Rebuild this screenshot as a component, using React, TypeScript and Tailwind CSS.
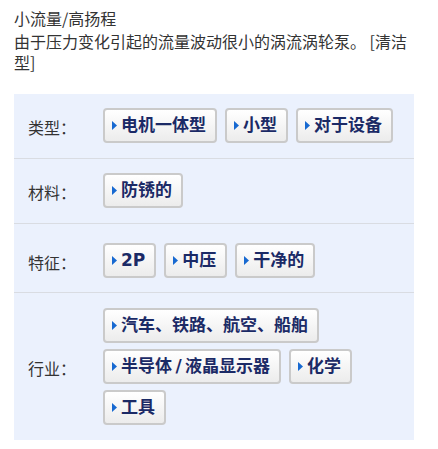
import React from "react";

const rows: { label: string; tags: string[]; pad: string }[] = [
  { label: "类型：", tags: ["电机一体型", "小型", "对于设备"], pad: "pt-[14px] pb-[15px]" },
  { label: "材料：", tags: ["防锈的"], pad: "pt-[14px] pb-[15px]" },
  { label: "特征：", tags: ["2P", "中压", "干净的"], pad: "pt-[19px] pb-[14px]" },
  { label: "行业：", tags: ["汽车、铁路、航空、船舶", "半导体\u2009/\u2009液晶显示器", "化学", "工具"], pad: "pt-[15px] pb-[15px]" },
];

function Tag({ text }: { text: string }) {
  return (
    <a
      href="#"
      className="flex h-[35px] items-center rounded-[4px] border-2 border-[#cacaca] bg-gradient-to-b from-white to-[#ececec] pl-[7px] pr-[9px] font-['DejaVu_Sans','Noto_Sans_CJK_SC',sans-serif] text-[17px] font-bold text-[#1b2a66]"
    >
      <svg width="5" height="9" viewBox="0 0 5 9" className="mr-[4px] shrink-0">
        <polygon points="0,0 5,4.5 0,9" fill="#1769d1" />
      </svg>
      <span className="leading-none">{text}</span>
    </a>
  );
}

export default function App() {
  return (
    <main className="min-h-screen bg-white px-[14px] pt-[8px] font-['Noto_Sans_CJK_SC',sans-serif] text-[#333]">
      <h1 className="text-[16px] leading-[21px] font-normal">小流量/高扬程</h1>
      <p className="mt-[2px] text-[16px] leading-[21px]">
        由于压力变化引起的流量波动很小的涡流涡轮泵。 [清洁型]
      </p>

      <div className="mt-[21px] w-[400px] bg-[#ebf1fd]">
        {rows.map((row, i) => (
          <div
            key={row.label}
            className={`flex items-center ${row.pad} ${i < rows.length - 1 ? "border-b border-[#d9dce2]" : ""}`}
          >
            <div className="w-[89px] shrink-0 pl-[14px] pt-[4px] text-[16px] leading-[21px]">{row.label}</div>
            <div className="flex flex-1 flex-wrap gap-x-[8px] gap-y-[6px]">
              {row.tags.map((t) => (
                <Tag key={t} text={t} />
              ))}
            </div>
          </div>
        ))}
      </div>
    </main>
  );
}
